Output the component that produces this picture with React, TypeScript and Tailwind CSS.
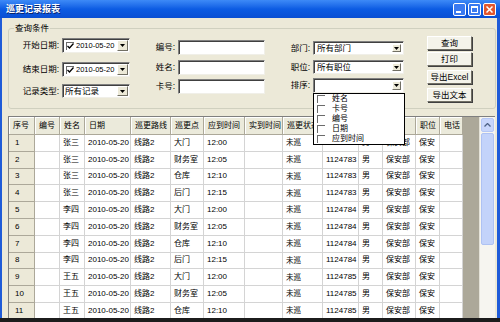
import type { ReactNode } from 'react';

const HEADERS = ['序号', '编号', '姓名', '日期', '巡更路线', '巡更点', '应到时间', '实到时间', '巡更状态', '卡号', '性别', '部门', '职位', '电话'];

const POINTS = [
  ['大门', '12:00'],
  ['财务室', '12:05'],
  ['仓库', '12:10'],
  ['后门', '12:15'],
];

const PEOPLE = [
  ['张三', '1124783'],
  ['李四', '1124784'],
  ['王五', '1124785'],
];

const ROWS = Array.from({ length: 11 }, (_, i) => {
  const [name, card] = PEOPLE[Math.floor(i / 4)];
  const [point, time] = POINTS[i % 4];
  return { no: String(i + 1), name, card, point, time };
});

const SORT_ITEMS = ['姓名', '卡号', '编号', '日期', '应到时间'];

function DropArrow({ w = 'w-[11px]' }: { w?: string }) {
  return (
    <div className={`${w} h-full shrink-0 flex items-center justify-center bg-[#ece9d8] border border-t-white border-l-white border-r-[#716f64] border-b-[#716f64]`}>
      <svg width="5" height="3" viewBox="0 0 5 3">
        <path d="M0 0h5L2.5 3z" fill="#000" />
      </svg>
    </div>
  );
}

function Sunken({ className = '', children }: { className?: string; children?: ReactNode }) {
  return (
    <div className={`flex items-center bg-white border border-t-[#808080] border-l-[#808080] border-r-[#f0efe8] border-b-[#f0efe8] shadow-[inset_1px_1px_0_#404040] ${className}`}>
      {children}
    </div>
  );
}

function CheckBox({ checked }: { checked?: boolean }) {
  return (
    <span className="w-[8px] h-[8px] shrink-0 flex items-center justify-center bg-white border-l border-t border-[#6b6b6b]">
      {checked && (
        <svg width="7" height="6" viewBox="0 0 7 6">
          <path d="M0.5 3l2 2 4-4.5" stroke="#000" strokeWidth="1.3" fill="none" />
        </svg>
      )}
    </span>
  );
}

function DateBox() {
  return (
    <Sunken className="w-[68px] h-full pl-[3px] pr-[1px] py-[1px] gap-[2px]">
      <CheckBox checked />
      <span className="flex-1 whitespace-nowrap text-[7.5px]">2010-05-20</span>
      <DropArrow />
    </Sunken>
  );
}

function Combo({ text }: { text?: string }) {
  return (
    <Sunken className="w-[91px] h-full pl-[3px] pr-[2px] py-[2px]">
      <span className="flex-1 whitespace-nowrap">{text}</span>
      <DropArrow w="w-[9px]" />
    </Sunken>
  );
}

function Label({ w, children }: { w: string; children: ReactNode }) {
  return <span className={`${w} shrink-0 text-right pr-[3px] whitespace-nowrap`}>{children}</span>;
}

function Button({ children, className = '' }: { children: ReactNode; className?: string }) {
  return (
    <div className={`w-[45px] h-[14px] flex items-center justify-center whitespace-nowrap bg-[#f4f3ea] border border-t-white border-l-white border-r-[#716f64] border-b-[#716f64] shadow-[1px_1px_0_#404040] ${className}`}>
      {children}
    </div>
  );
}

function TitleButton({ kind }: { kind: 'min' | 'max' | 'close' }) {
  const bg = kind === 'close' ? 'bg-[#e2572f]' : 'bg-[#3a7af0]';
  return (
    <div className={`w-[13px] h-[13px] rounded-[2px] border border-white ${bg} flex items-center justify-center`}>
      {kind === 'min' && <span className="w-[5px] h-[2px] bg-white mt-[5px] -ml-[2px]" />}
      {kind === 'max' && <span className="w-[7px] h-[7px] border border-white border-t-2" />}
      {kind === 'close' && (
        <svg width="7" height="7" viewBox="0 0 7 7">
          <path d="M0.5 0.5l6 6M6.5 0.5l-6 6" stroke="#fff" strokeWidth="1.5" />
        </svg>
      )}
    </div>
  );
}

export default function App() {
  return (
    <div className="relative w-[500px] h-[322px] overflow-hidden flex flex-col bg-[#1c1c1c] text-black text-[8.5px] leading-none [font-family:'Liberation_Sans','Noto_Sans_CJK_SC',sans-serif]">
      {/* title bar */}
      <div className="h-[18px] shrink-0 flex items-center pl-[6px] pr-[4px] bg-gradient-to-b from-[#3d8af7] via-[#0c5ce3] to-[#0a4fd3]">
        <span className="flex-1 text-white font-bold text-[9px] [text-shadow:1px_1px_0_#0a246a]">巡更记录报表</span>
        <div className="flex gap-[2px]">
          <TitleButton kind="min" />
          <TitleButton kind="max" />
          <TitleButton kind="close" />
        </div>
      </div>

      {/* window body */}
      <div className="h-[300px] shrink-0 flex flex-col bg-[#ece9d8] border-l-2 border-r-[3px] border-[#1f5bd8]">
        <fieldset className="ml-[6px] mr-[1px] mt-[5px] h-[86px] border border-[#d0d0bf] rounded-[3px] p-0 m-0">
          <legend className="ml-[5px] px-[1px] leading-[10px]">查询条件</legend>
          <div className="flex items-start">
            {/* dates */}
            <div className="flex flex-col pt-[5px]">
              <div className="flex items-center h-[15px]">
                <Label w="w-[53px]">开始日期:</Label>
                <DateBox />
              </div>
              <div className="flex items-center h-[15px] mt-[9px]">
                <Label w="w-[53px]">结束日期:</Label>
                <DateBox />
              </div>
              <div className="flex items-center h-[14px] mt-[7px]">
                <Label w="w-[53px]">记录类型:</Label>
                <Sunken className="w-[68px] h-full pl-[2px] pr-[1px] py-[1px]">
                  <span className="flex-1">所有记录</span>
                  <DropArrow />
                </Sunken>
              </div>
            </div>

            {/* text inputs */}
            <div className="flex flex-col pt-[7px]">
              <div className="flex items-center h-[15px]">
                <Label w="w-[48px]">编号:</Label>
                <Sunken className="w-[87px] h-full" />
              </div>
              <div className="flex items-center h-[15px] mt-[5px]">
                <Label w="w-[48px]">姓名:</Label>
                <Sunken className="w-[87px] h-full" />
              </div>
              <div className="flex items-center h-[15px] mt-[4px]">
                <Label w="w-[48px]">卡号:</Label>
                <Sunken className="w-[87px] h-full" />
              </div>
            </div>

            {/* combos */}
            <div className="flex flex-col pt-[8px]">
              <div className="flex items-center h-[14px]">
                <Label w="w-[48px]">部门:</Label>
                <Combo text="所有部门" />
              </div>
              <div className="flex items-center h-[14px] mt-[5px]">
                <Label w="w-[48px]">职位:</Label>
                <Combo text="所有职位" />
              </div>
              <div className="flex items-center h-[15px] mt-[4px]">
                <Label w="w-[48px]">排序:</Label>
                <Combo />
              </div>
            </div>

            {/* buttons */}
            <div className="flex flex-col ml-[23px] pt-[3px]">
              <Button>查询</Button>
              <Button className="mt-[2px]">打印</Button>
              <Button className="mt-[4px]">导出Excel</Button>
              <Button className="mt-[4px]">导出文本</Button>
            </div>
          </div>
        </fieldset>

        {/* grid */}
        <div className="ml-[6px] mr-[2px] mt-[7px] flex-1 min-h-0 flex border-l border-t border-[#7f7f7f] text-[8px] overflow-hidden">
          <div className="flex-1 bg-[#aca899] overflow-hidden">
            <div className="grid w-fit grid-cols-[26px_25px_25px_46px_40px_33px_41px_38px_40px_36px_24px_33px_24px_23px] grid-rows-[18px] auto-rows-[16.8px]">
              {HEADERS.map(h => (
                <div key={h} className="flex items-center pl-[4px] whitespace-nowrap overflow-hidden bg-[#ebeadb] border-r border-b border-[#aca899] shadow-[inset_1px_1px_0_#fff]">
                  {h}
                </div>
              ))}
              {ROWS.map(r => {
                const cells = ['', r.name, '2010-05-20', '线路2', r.point, r.time, '', '未巡', r.card, '男', '保安部', '保安', ''];
                return [
                  <div key={`${r.no}-no`} className="flex items-center pl-[6px] bg-[#ece9d8] border-r border-b border-[#aca899]">
                    {r.no}
                  </div>,
                  ...cells.map((c, i) => (
                    <div key={`${r.no}-${i}`} className={`flex items-center whitespace-nowrap overflow-hidden bg-white border-r border-b border-[#d4d4d4] ${i === 7 ? 'pl-[3px] text-[7.5px]' : 'pl-[3px]'}`}>
                      {c}
                    </div>
                  )),
                ];
              })}
            </div>
          </div>

          {/* scrollbar */}
          <div className="w-[16px] shrink-0 flex flex-col bg-[#f6f5f0] px-[1px] pt-[1px] border-l border-[#e4e2d8]">
            <div className="h-[14px] flex items-center justify-center rounded-[2px] bg-[#c8d6fb] border border-[#b4c7f5]">
              <svg width="7" height="4" viewBox="0 0 7 4">
                <path d="M0.5 3.5l3-3 3 3" stroke="#4d6185" strokeWidth="1.3" fill="none" />
              </svg>
            </div>
            <div className="h-[112px] mt-[1px] rounded-[2px] bg-[#c3d3fa] border border-[#aec2f3]" />
          </div>
        </div>
      </div>

      {/* sort dropdown list */}
      <div className="absolute left-[313px] top-[93px] w-[92px] h-[52px] bg-white border border-black flex flex-col">
        {SORT_ITEMS.map(item => (
          <div key={item} className="h-[10px] shrink-0 flex items-center pl-[3px] gap-[7px] text-[8px] leading-[10px]">
            <CheckBox />
            <span className="whitespace-nowrap">{item}</span>
          </div>
        ))}
      </div>
    </div>
  );
}
